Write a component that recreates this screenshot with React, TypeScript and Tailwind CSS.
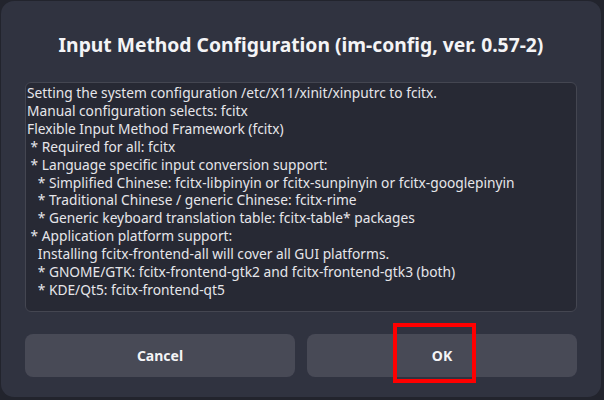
import React from "react";

const lines = [
  "Setting the system configuration /etc/X11/xinit/xinputrc to fcitx.",
  "Manual configuration selects: fcitx",
  "Flexible Input Method Framework (fcitx)",
  " * Required for all: fcitx",
  " * Language specific input conversion support:",
  "   * Simplified Chinese: fcitx-libpinyin or fcitx-sunpinyin or fcitx-googlepinyin",
  "   * Traditional Chinese / generic Chinese: fcitx-rime",
  "   * Generic keyboard translation table: fcitx-table* packages",
  " * Application platform support:",
  "   Installing fcitx-frontend-all will cover all GUI platforms.",
  "   * GNOME/GTK: fcitx-frontend-gtk2 and fcitx-frontend-gtk3 (both)",
  "   * KDE/Qt5: fcitx-frontend-qt5",
];

export default function App() {
  return (
    <div className="w-[604px] h-[400px] bg-[#22242d] overflow-hidden" style={{ fontFamily: '"Noto Sans", sans-serif' }}>
      <div className="relative ml-[1px] mt-[1px] w-[600px] h-[396px] rounded-[13px] bg-[#303340] flex flex-col px-[24px]">
        <div className="h-[81px] flex items-center justify-center pt-[8px]">
          <h1 className="text-[19.3px] font-bold text-[#f4f4f6]">
            Input Method Configuration (im-config, ver. 0.57-2)
          </h1>
        </div>
        <div className="h-[230px] rounded-[6px] border border-[#444651] bg-[#272934] pl-[1px] pt-[1px]">
          {lines.map((l, i) => (
            <div key={i} className="text-[13.75px] leading-[17.9px] text-[#e6e6ea] whitespace-pre">
              {l}
            </div>
          ))}
        </div>
        <div className="mt-[22px] flex gap-[12px]">
          <button className="flex-1 h-[43px] rounded-[8px] bg-[#484a56] text-[14px] font-bold text-[#f4f4f6]">
            Cancel
          </button>
          <button className="flex-1 h-[43px] rounded-[8px] bg-[#484a56] text-[14px] font-bold text-[#f4f4f6]">
            OK
          </button>
        </div>
        <div className="absolute left-[392px] top-[322px] w-[83px] h-[60px] border-[4px] border-[#ff0000]" />
      </div>
    </div>
  );
}
